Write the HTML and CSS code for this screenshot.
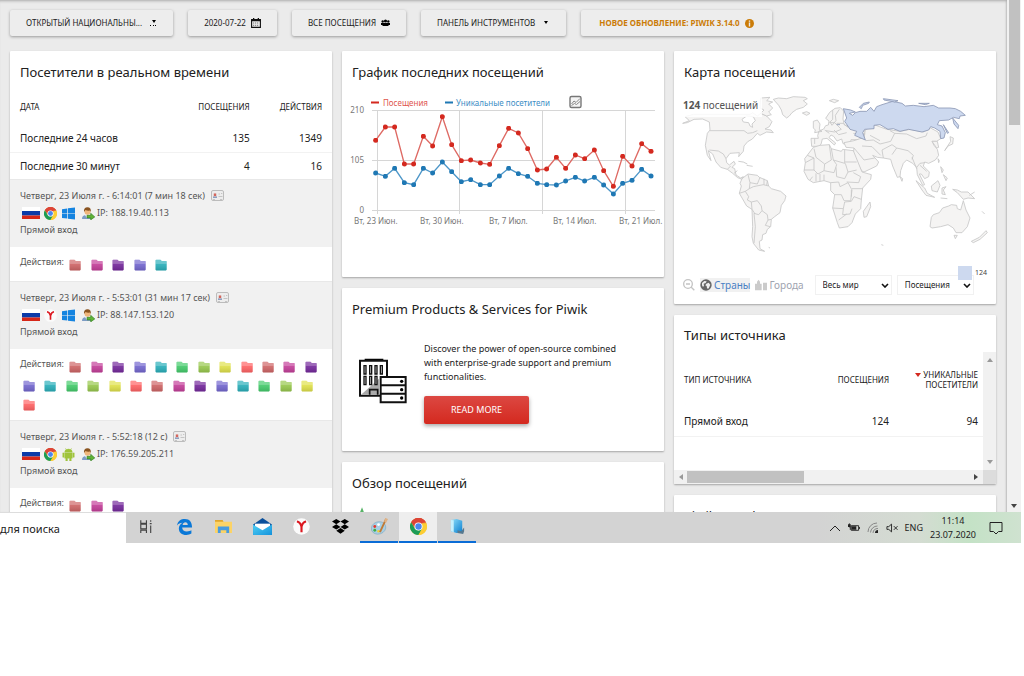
FILE: index.html
```html
<!DOCTYPE html>
<html lang="ru">
<head>
<meta charset="utf-8">
<title>Piwik</title>
<link rel="stylesheet" href="styles.css">
</head>
<body>
<svg class="defs" aria-hidden="true">
  <defs>
    <linearGradient id="shade" x1="0" y1="0" x2="0" y2="1"><stop offset="0" stop-color="#fff" stop-opacity=".3"/><stop offset=".35" stop-color="#fff" stop-opacity=".3"/><stop offset=".4" stop-color="#fff" stop-opacity=".08"/><stop offset="1" stop-color="#000" stop-opacity=".12"/></linearGradient>
    <linearGradient id="mailg" x1="0" y1="0" x2="1" y2="1"><stop offset="0" stop-color="#4fd0f5"/><stop offset="1" stop-color="#1593dc"/></linearGradient>
    <linearGradient id="bookg" x1="0" y1="0" x2="1" y2="1"><stop offset="0" stop-color="#8fe0fb"/><stop offset="1" stop-color="#0a7fd0"/></linearGradient>
    <marker id="dotR" markerUnits="userSpaceOnUse" markerWidth="16" markerHeight="16" refX="8" refY="8"><circle cx="8" cy="8" r="7.500" fill="#d4291f"/></marker>
    <marker id="dotB" markerUnits="userSpaceOnUse" markerWidth="16" markerHeight="16" refX="8" refY="8"><circle cx="8" cy="8" r="7.500" fill="#1f78b4"/></marker>
  </defs>
  <symbol id="folder" viewBox="0 0 12 12"><path d="M.5 1.500q0-.8.8-.8h4q.7 0 .9.6l.3.7h4.600q.6 0 .6.6v8q0 .8-.8.8H1.300q-.8 0-.8-.8z" fill="currentColor"/><path d="M.5 1.500q0-.8.8-.8h4q.7 0 .9.6l.3.7h4.600q.6 0 .6.6v8q0 .8-.8.8H1.300q-.8 0-.8-.8z" fill="url(#shade)"/></symbol>
  <symbol id="chrome" viewBox="0 0 24 24"><circle cx="12" cy="12" r="12" fill="#f7c52d"/><path d="M12 12 1.600 6A12 12 0 0 1 22.400 6z" fill="#dc4437"/><path d="M12 6h10.400A12 12 0 0 0 1.600 6L7 14z" fill="#dc4437"/><path d="M1.600 6A12 12 0 0 0 12 24l5.200-9L12 17.500 7 15z" fill="#1c9c57"/><path d="M22.400 6A12 12 0 0 1 12 24l5.300-9.200L17 7z" fill="#fccd33"/><path d="M12 6h10.400l.6 1.500H15z" fill="#dc4437" opacity=".6"/><circle cx="12" cy="12" r="5.700" fill="#fff"/><circle cx="12" cy="12" r="4.500" fill="#4a87ee"/></symbol>
  <symbol id="yandex" viewBox="0 0 24 24"><circle cx="12" cy="12" r="11.700" fill="#fbfbfb"/><path d="M5.500 5c3 .3 5.500 3.500 6.500 7.500C13 8.500 15.500 5.300 18.500 5M12 12v8" fill="none" stroke="#dc1820" stroke-width="3"/></symbol>
  <symbol id="win" viewBox="0 0 13 12"><path d="M0 1.700 5.300.9v4.800H0zM6 .8 13 0v5.700H6zM0 6.300h5.300v4.800L0 10.400zM6 6.300h7V12l-7-.8z" fill="#1584e0"/></symbol>
  <symbol id="android" viewBox="0 0 12 12"><path d="M2.500 4A3.500 3 0 0 1 9.500 4zM2.500 4.500h7v5h-1V12H7V9.500H5V12H3.500V9.500h-1zM.7 4.500h1.200v4H.7zM10.100 4.500h1.200v4h-1.200zM3 0l1 1.500M9 0 8 1.500" fill="#a0c43c" stroke="#a0c43c" stroke-width=".4"/></symbol>
  <symbol id="flag" viewBox="0 0 18 12"><path d="M0 0h18v4H0z" fill="#fff"/><path d="M0 4h18v4.500H0z" fill="#0b3ba8"/><path d="M0 8.500h18V12H0z" fill="#d62718"/></symbol>
  <symbol id="visitor" viewBox="0 0 13 13"><path d="M0 12c0-3 1.500-4 4.500-4S9 9 9 12z" fill="#7d9cc4"/><path d="M3 8l1.700 3L7 8z" fill="#e9eef5"/><circle cx="5.500" cy="4.800" r="3" fill="#f0b77c"/><path d="M2 5C1.500 2 3 .3 5.500.3S9.300 2 8.800 5L8 3.500Q5.500 4 3.500 3z" fill="#8a5420"/><path d="M5 8.300h3.700V6.300l4.100 3.600-4.100 3v-2H5z" fill="#5fb336" stroke="#2f7a1e" stroke-width=".6"/></symbol>
  <symbol id="card" viewBox="0 0 13 12"><rect x=".5" y=".5" width="12" height="10" rx="1.500" fill="#ededed" stroke="#bcbcbc"/><path d="M2 3.500h4V8H2z" fill="#e0cfcd"/><path d="M3 3.500h2V6H3z" fill="#d5655c"/><path d="M2 6.500h4V8H2z" fill="#8e9fc0"/><path d="M7.500 4H9M10 3.500h1.300M7.500 6.500h4M2 9.500h2M9 9.500h2" stroke="#c4c4c4"/></symbol>
</svg>

<div class="desktop">
  <div class="browser">
    <main class="page">
      <nav class="toolbar">
        <button class="tool" type="button">Открытый национальны... <svg class="caret" width="8" height="6" viewBox="0 0 8 6"><path d="M3 0h4L5 3z"/><path d="M1 5h1v1H1zM4 5h1v1H4zM6 5h1v1H6z"/></svg></button>
        <button class="tool" type="button">2020-07-22 <svg width="10" height="10" viewBox="0 0 10 10"><path d="M.6 1.600h8.800v7.800H.6z" fill="none" stroke="#111" stroke-width="1.100"/><path d="M.5 1.300h9v2h-9zM2 0h1.300v2H2zM6.700 0H8v2H6.700z" fill="#111"/><path d="M2 5h6M2 7.300h6" stroke="#777" stroke-dasharray="1.200 .8"/></svg></button>
        <button class="tool" type="button">Все посещения <svg width="9" height="8" viewBox="0 0 9 8"><circle cx="1.700" cy="2.500" r="1.200"/><circle cx="7.300" cy="2.500" r="1.200"/><circle cx="4.500" cy="2" r="1.600"/><path d="M0 4h9v2H7.500v1h-6V6H0z"/></svg></button>
        <button class="tool" type="button">Панель инструментов <svg class="caret" width="8" height="6" viewBox="0 0 8 6"><path d="M2 1h4L4 4z"/></svg></button>
        <button class="tool update" type="button">Новое обновление: Piwik 3.14.0 <svg width="9" height="9" viewBox="0 0 9 9"><circle cx="4.500" cy="4.500" r="4.500" fill="#cb7c08"/><path d="M3.800 1.500h1.400v1.300H3.800zM3.800 3.500h1.400v4H3.800z" fill="#ebebeb"/></svg></button>
      </nav>

      <div class="columns">
        <div class="column">
          <section class="widget">
            <h2>Посетители в реальном времени</h2>
            <table class="totals">
              <thead><tr><th>Дата</th><th>Посещения</th><th>Действия</th></tr></thead>
              <tbody>
                <tr><td>Последние 24 часов</td><td>135</td><td>1349</td></tr>
                <tr><td>Последние 30 минут</td><td>4</td><td>16</td></tr>
              </tbody>
            </table>
            <div class="visit">
              <p>Четверг, 23 Июля г. - 6:14:01 (7 мин 18 сек) <svg class="profile"><use href="#card"/></svg></p>
              <p class="client"><svg class="flag"><use href="#flag"/></svg><svg><use href="#chrome"/></svg><svg><use href="#win"/></svg><svg class="who"><use href="#visitor"/></svg><span>IP: 188.19.40.113</span></p>
              <p>Прямой вход</p>
            </div>
            <div class="actions"><span>Действия:</span>
              <svg class="c1"><use href="#folder"/></svg> <svg class="c2"><use href="#folder"/></svg> <svg class="c3"><use href="#folder"/></svg> <svg class="c4"><use href="#folder"/></svg> <svg class="c5"><use href="#folder"/></svg>
            </div>
            <div class="visit">
              <p>Четверг, 23 Июля г. - 5:53:01 (31 мин 17 сек) <svg class="profile"><use href="#card"/></svg></p>
              <p class="client"><svg class="flag"><use href="#flag"/></svg><svg><use href="#yandex"/></svg><svg><use href="#win"/></svg><svg class="who"><use href="#visitor"/></svg><span>IP: 88.147.153.120</span></p>
              <p>Прямой вход</p>
            </div>
            <div class="actions"><span>Действия:</span>
              <svg class="c1"><use href="#folder"/></svg> <svg class="c2"><use href="#folder"/></svg> <svg class="c3"><use href="#folder"/></svg> <svg class="c4"><use href="#folder"/></svg> <svg class="c5"><use href="#folder"/></svg> <svg class="c6"><use href="#folder"/></svg> <svg class="c7"><use href="#folder"/></svg> <svg class="c8"><use href="#folder"/></svg> <svg class="c9"><use href="#folder"/></svg>
              <svg class="c1"><use href="#folder"/></svg> <svg class="c2"><use href="#folder"/></svg> <svg class="c3"><use href="#folder"/></svg> <svg class="c4"><use href="#folder"/></svg> <svg class="c5"><use href="#folder"/></svg> <svg class="c6"><use href="#folder"/></svg> <svg class="c7"><use href="#folder"/></svg> <svg class="c8"><use href="#folder"/></svg> <svg class="c9"><use href="#folder"/></svg>
              <svg class="c1"><use href="#folder"/></svg> <svg class="c2"><use href="#folder"/></svg> <svg class="c3"><use href="#folder"/></svg> <svg class="c4"><use href="#folder"/></svg> <svg class="c5"><use href="#folder"/></svg> <svg class="c6"><use href="#folder"/></svg> <svg class="c7"><use href="#folder"/></svg> <svg class="c8"><use href="#folder"/></svg> <svg class="c9"><use href="#folder"/></svg>
            </div>
            <div class="visit">
              <p>Четверг, 23 Июля г. - 5:52:18 (12 с) <svg class="profile"><use href="#card"/></svg></p>
              <p class="client"><svg class="flag"><use href="#flag"/></svg><svg><use href="#chrome"/></svg><svg><use href="#android"/></svg><svg class="who"><use href="#visitor"/></svg><span>IP: 176.59.205.211</span></p>
              <p>Прямой вход</p>
            </div>
            <div class="actions"><span>Действия:</span>
              <svg class="c1"><use href="#folder"/></svg> <svg class="c2"><use href="#folder"/></svg> <svg class="c3"><use href="#folder"/></svg>
            </div>
          </section>
        </div>

        <div class="column">
          <section class="widget evolution">
            <h2>График последних посещений</h2>
            <svg class="chart" viewBox="0 0 322 150">
              <g fill="none" stroke="#d6d6d6"><path d="M30 20.500h283M30 70.500h283M30 120.500h283M35.500 20v104M117.500 20v104M200.500 20v104M283.500 20v104"/></g>
              <path d="M29 12.500h8" stroke="#d4291f" stroke-width="2"/><path d="M103 12.500h8" stroke="#1f78b4" stroke-width="2"/>
              <text x="41" y="16" fill="#e0554d">Посещения</text><text x="114" y="16" fill="#3d8ec5">Уникальные посетители</text>
              <rect x="228" y="6.500" width="11" height="11" rx="1.500" fill="#f4f4f4" stroke="#777" stroke-width="1.400"/><path d="m229.500 14 2.500-3 2 1.500 4-4M229.500 15.500l3-2 2 1 3.500-3" fill="none" stroke="#888"/>
              <g fill="#777"><g text-anchor="end"><text x="22" y="23">210</text><text x="22" y="73">105</text><text x="22" y="123">0</text></g>
              <text x="12" y="134">Вт, 23 Июн.</text><text x="78" y="134">Вт, 30 Июн.</text><text x="147" y="134">Вт, 7 Июл.</text><text x="211" y="134">Вт, 14 Июл.</text><text x="277" y="134">Вт, 21 Июл.</text></g>
              <svg width="322" height="150" viewBox="6 0 966 450"><g fill="none" stroke-width="4">
                <polyline stroke="#de6a64" marker-start="url(#dotR)" marker-mid="url(#dotR)" marker-end="url(#dotR)" points="107,151 136,111 164,111 193,222 221,222 250,139 278,168 307,80 335,164 364,212 392,210 421,219 449,223 478,167 506,115 535,129 563,176 592,240 620,237 649,202 677,235 706,195 734,206 763,180 791,242 820,289 848,199 876,228 905,161 933,184"/>
                <polyline stroke="#4d96c8" marker-start="url(#dotB)" marker-mid="url(#dotB)" marker-end="url(#dotB)" points="107,249 136,259 164,235 193,278 221,284 250,235 278,249 307,216 335,245 364,275 392,269 421,284 449,284 478,258 506,235 535,251 563,259 592,280 620,284 649,285 677,273 706,262 734,273 763,262 791,285 820,312 848,280 876,271 905,238 933,258"/>
              </g></svg>
            </svg>
          </section>

          <section class="widget premium">
            <h2>Premium Products &amp; Services for Piwik</h2>
            <div class="promo">
              <svg class="promo-art" viewBox="0 0 144 138"><path d="M17 2h56v6H17z"/><path d="M3 8h81v105H3z" fill="#fff" stroke="#111" stroke-width="6"/><path d="M6 110 60 62v48z" fill="#aaa"/><path d="M15 23h6v25h-6zM32 23h6v25h-6zM48 23h6v25h-6zM64 23h6v25h-6zM15 55h6v25h-6zM32 55h6v25h-6zM48 55h6v25h-6z" fill="#ddd" stroke="#111" stroke-width="4"/><path d="M32 110V95h24v15" fill="#aaa" stroke="#111" stroke-width="5"/><path d="M65 57h75v76H65zM65 82h75M65 107h75" fill="#fff" stroke="#111" stroke-width="6"/><circle cx="128" cy="70" r="5"/><circle cx="128" cy="95" r="5"/><circle cx="128" cy="120" r="5"/></svg>
              <div class="promo-text"><p>Discover the power of open-source combined with enterprise-grade support and premium functionalities.</p><a class="more" href="#more">READ MORE</a></div>
            </div>
          </section>

          <section class="widget overview">
            <h2>Обзор посещений</h2>
            <svg class="spark" viewBox="0 0 100 20"><path d="M0 7h6M32 7h5" stroke="#bbb" stroke-width="1.500"/><path d="M8 12l5-4 2-5 3 8 8-1 10 4" fill="none" stroke="#58b368" stroke-width="2"/></svg>
          </section>
        </div>

        <div class="column">
          <section class="widget mapcard">
            <h2>Карта посещений</h2>
            <div class="mapwrap">
              <p class="mapcount"><b>124</b> посещений</p>
              <svg class="map" viewBox="12 45 966 480">
                <g fill="#f5f4f3" stroke="#c6c6c6" stroke-width="2.500" stroke-linejoin="round">
                  <path d="M38 130 58 122 45 110 70 103H240L248 98 262 108 272 100 290 108 306 125 298 140 285 147 303 150 310 158 290 156 270 166 262 160 247 177 233 185 222 198 220 214 206 230 208 218 180 220 168 236 170 248 178 255 192 244 196 252 186 262 194 266 198 285 212 294 220 290 216 298 203 293 188 280 172 268 152 262 138 246 128 222 115 212 123 242 112 226 106 196 112 160 120 150 118 126 98 117 72 118 52 128z"/>
                  <path d="M120 152H222L233 160 248 158 262 152M118 210 145 213 160 222 168 236M172 268l10-10M192 280l10-8" fill="none"/>
                  <path d="M216 118 230 108 250 110 256 122 246 132 248 142 240 138 236 128 220 126z" fill="#fff"/>
                  <path d="M272 54 300 52 290 62 308 66 296 72 308 84 296 96 304 104 290 108 272 100 282 90 270 84zM310 58 325 54 350 56 370 50 405 52 412 56 400 62 412 72 400 82 380 88 366 98 358 108 350 114 338 104 334 90 326 76zM397 99 410 95 420 100 410 106zM205 244l15 2 12 6 M230 256l18 3"/>
                  <path d="M478 62l12-4 16 4-12 6zM430 124l12-4 8 12-2 16 8 6-22 4 2-8-6-6zM447 153l14-6 6-10 8-2 2-12-10-8 12-18 16-12 16-2 10 10-2 24 4 18 16 6 24 2 22 10 0 20-16 6-26 0-2 16-22-4-4-14-14 6-10-14 -8-4-6 8 20 16-4 6-22-20-14 2-4 16-8 6h-20l-2-24h22l-2-8z"/>
                  <path d="M488 90v28l-8 8 6 10 12-14-2-16 12-18M478 128h16l20 20-20 8-26-4M500 130h20l14 12M492 150l14 14 24-6M464 150l14 10M434 176v16" fill="none"/>
                  <path d="M582 172 586 150 612 134 650 148 690 154 720 148 760 156 782 144 804 156 812 176 800 184 786 184 792 196 802 208 806 226 796 240 776 250 764 246 760 258 778 276 776 290 764 296 754 282 748 282 764 314 758 316 742 284 740 262 728 250 710 240 700 250 692 272 690 290 682 292 668 258 662 238 640 234 622 232 608 226 626 246 620 258 582 276 574 272 550 220 552 204 528 202 522 188 552 182z"/>
                  <path d="M586 182 610 180 630 192 662 184 674 160 710 162 740 176 768 168 772 158M600 166l30 16M576 198l30 2 26 26M640 234l-4-24 30-16 14 10 34 8 16 14-4 12M680 204l-14 20 M552 204l30 36 32-6M726 232l14 34M740 262l10-12 14-2M750 256l20 18M674 160l-14-8" fill="none"/>
                  <path d="M430 202 450 196 478 194 484 206 514 214 518 208 550 212 576 276 604 284 602 298 578 324 574 360 572 386 556 402 546 428 534 440 508 444 502 428 488 384 494 344 482 332 482 308 462 302 430 308 414 298 402 274 406 248 404 236z"/>
                  <path d="M406 248 432 234V270H402M432 234 412 226M432 206 438 232 464 252 484 240 478 194M484 206 490 240 524 250V210M524 246H560M464 252 462 272 444 282 432 270M462 272 492 278 500 254 490 240M498 262 500 290 524 296 534 276 526 250M530 306 566 308 572 290 550 278M482 308 506 306 510 320 534 308 546 330 542 362 522 362 514 344 494 344M488 384 520 386 524 366 544 364 552 350 574 358M520 386 518 404 540 402 546 386M506 420 530 402M438 304V280M450 304V282M462 302V284M420 300 428 290M546 326H578M534 276 560 270M544 330V350" fill="none"/>
                  <path d="M600 366 602 380 590 410 582 412 580 394zM550 160l36 2"/>
                  <path d="M216 296 234 282 262 286 268 292 292 302 296 318 304 326 332 334 348 348 344 362 334 376 330 398 314 410 304 418 302 440 292 448 288 460 278 464 276 480 268 484 270 506 284 514 266 510 250 490 246 470 248 440 246 388 230 378 208 340 214 318 210 310z"/>
                  <path d="M234 284 240 308 262 312 270 292M240 308 238 326 250 320 280 314 296 318M208 340 226 334 238 326M226 334 236 350 232 360 244 366 246 388M244 366 262 362 274 378 276 392 292 404 294 420 304 418M276 392 266 404 252 400 256 440 252 490M294 420 286 436 300 440M282 296V314M292 302 290 316M254 400 246 388" fill="none"/>
                  <path d="M738 302 764 324 772 340 794 352 768 346 756 330zM784 318 804 302 810 316 802 336 786 332zM816 324l12-4-8 10 6 14-10-2zM812 260l8 10-4 8zM820 284l12 10-4 8zM848 328l14 2 12 6 20 0 20 20-20-2-14 4-18-20zM898 346l16-10M812 354l20 2M824 212 834 198 848 192 850 174 840 170 842 184zM786 184l16 0 4 18-6 2zM690 290l8 6-2 8zM804 236l4 6-2 6z"/>
                  <path d="M784 412 790 404 808 398 818 384 836 378 844 374 860 376 862 386 872 390 880 362 888 390 900 414 892 440 876 458 858 458 850 444 834 434 812 440 786 444 780 440zM852 466l10 0-6 10zM904 484l24-12 20-20 4 6-22 20-20 10zM936 394l8 8M634 494l6 2M296 502l4 2"/>
                </g>
                <g fill="#cdd9ef" stroke="#8b98b4" stroke-width="2.500" stroke-linejoin="round">
                  <path d="M520 86 542 90 556 96 538 100 548 106 556 98 570 94 590 94 602 82 612 94 620 80 636 74 668 64 696 70 706 78 730 76 762 80 790 76 806 84 840 84 856 86 872 94 886 106 870 108 868 116 850 112 836 120 808 122 802 134 816 138 826 158 822 174 812 176 810 154 794 144 782 140 776 150 756 156 716 148 690 154 670 146 654 148 630 134 612 136 612 146 584 148 578 158 586 180 554 166 560 154 540 148 524 124 530 114z"/>
                  <path d="M848 114 866 136 864 146 852 132zM568 82 580 70 598 66 596 70 578 76 574 86zM640 56l44 6-10 4-32-6zM746 70l32 0-12 4zM820 134l16 24-4 2zM500 134h10"/>
                </g>
              </svg>
            </div>
            <div class="mapctl">
              <svg class="mini" viewBox="0 0 36 36"><circle cx="15" cy="15" r="13" fill="none" stroke="#c4c4c4" stroke-width="4"/><path d="m24 24 10 10M9 15h12" stroke="#c4c4c4" stroke-width="4"/></svg>
              <a class="view on" href="#countries"><svg class="mini" viewBox="0 0 36 36"><circle cx="18" cy="18" r="17" fill="#666"/><path d="M6 12 13 6l7 1-3 5-6 2 1 6-3 4-3-5zM19 14l7-3 5 6-4 9-3 4-3-3-1-6-4-2z" fill="#eee"/></svg>Страны</a>
              <a class="view" href="#cities"><svg class="mini" viewBox="0 0 36 36"><path d="M0 34V14h6V8l5-6 4 6v6h5v20zM24 34V11h12v23z" fill="#cbcbcb"/></svg>Города</a>
              <span class="pick"><select aria-label="Регион"><option>Весь мир</option></select><svg viewBox="0 0 8 5"><path d="m1 1 3 3 3-3" fill="none" stroke="#111" stroke-width="1.600"/></svg></span>
              <span class="pick"><select aria-label="Показатель"><option>Посещения</option></select><svg viewBox="0 0 8 5"><path d="m1 1 3 3 3-3" fill="none" stroke="#111" stroke-width="1.600"/></svg><span class="legend"><i></i>124</span></span>
            </div>
          </section>

          <section class="widget sources">
            <h2>Типы источника</h2>
            <div class="scroller">
              <div class="tablewrap">
                <table>
                  <thead><tr><th>Тип источника</th><th>Посещения</th><th><svg width="6" height="5" viewBox="0 0 6 5"><path d="M0 0h6L3 4z" fill="#d4291f"/></svg> Уникальные посетители</th></tr></thead>
                  <tbody><tr><td>Прямой вход</td><td>124</td><td>94</td></tr></tbody>
                </table>
              </div>
              <div class="vbar"><svg viewBox="0 0 6 4"><path d="M0 4h6L3 0z" fill="#999"/></svg><svg viewBox="0 0 6 4"><path d="M0 0h6L3 4z" fill="#999"/></svg></div>
              <div class="hbar"><svg viewBox="0 0 4 6"><path d="M4 0v6L0 3z" fill="#999"/></svg><span class="thumb"></span><svg viewBox="0 0 4 6"><path d="M0 0v6l4-3z" fill="#444"/></svg></div>
              <div class="corner"></div>
            </div>
          </section>

          <section class="widget blog"><h2>Piwik.org Blog</h2></section>
        </div>
      </div>
    </main>
    <div class="pagebar"><span class="thumb"></span><svg viewBox="0 0 6 4"><path d="M0 0h6L3 4z" fill="#444"/></svg></div>
  </div>

  <footer class="taskbar">
    <div class="search">для поиска</div>
    <div class="apps">
      <button type="button" aria-label="Представление задач"><svg viewBox="0 0 18 18"><path d="M4 2.500v3h6v-3M4 16v-3h6v3M4 6.500h6v5H4zM14.500 8v8M14.500 2.500v1.500M13.500 6h2" fill="none" stroke="#444" stroke-width="1.200"/></svg></button>
      <button type="button" aria-label="Edge"><svg viewBox="0 0 18 18"><path d="M1 8C2 3 5 1 9.500 1 14.500 1 17 4.500 17 10H6.500c.2 3 2 4.200 5 4.200 2 0 3.500-.5 4.800-1.200v3.500C14.800 17.500 13 18 11 18 6 18 3 15 3 11c0-2.500 1.500-4.700 4-6C4.500 5 2.500 6 1 8zM7 7.300h5.500C12.300 5.500 11.500 4.500 10 4.500S7.300 5.500 7 7.300z" fill="#0b78d7"/></svg></button>
      <button type="button" aria-label="Проводник"><svg viewBox="0 0 18 18"><path d="M0 2h8l1 2h9v12H0z" fill="#fcd366"/><path d="M0 2h8l1 2H0z" fill="#e0a62c"/><path d="M3 16V9h12v7h-3v-3H6v3z" fill="#479be0"/></svg></button>
      <button type="button" aria-label="Почта"><svg class="big" viewBox="0 0 20 18"><path d="M0 7 10 0l10 7v11H0z" fill="#0a509c"/><path d="M2 6h16v8H2z" fill="#fff"/><path d="M0 7l10 6 10-6v11H0z" fill="url(#mailg)"/></svg></button>
      <button type="button" aria-label="Яндекс"><svg><use href="#yandex"/></svg></button>
      <button type="button" aria-label="Dropbox"><svg viewBox="0 0 18 18"><path d="m4.500 1 4.500 2.800-4.500 2.800L0 3.800zM13.500 1 18 3.800l-4.500 2.800L9 3.800zM4.500 6.600 9 9.400l-4.500 2.800L0 9.400zM13.500 6.600 18 9.400l-4.500 2.800L9 9.400zM9 10.600l4.500 2.800L9 16.600l-4.500-3.200z"/></svg></button>
      <button class="open" type="button" aria-label="Paint"><svg viewBox="0 0 18 18"><ellipse cx="8" cy="10.500" rx="7.800" ry="6.500" transform="rotate(-18 8 10.500)" fill="#a8cfe4" stroke="#7fa8be" stroke-width=".6"/><circle cx="4" cy="9" r="1.500" fill="#e23b2e"/><circle cx="8" cy="7" r="1.500" fill="#fff"/><circle cx="4" cy="13" r="1.500" fill="#3fae49"/><circle cx="8" cy="14" r="1.400" fill="#f3cf3a"/><path d="M16 1 9.500 15" stroke="#c07a35" stroke-width="2"/><path d="m15 0 3 1-2 4-2-1z" fill="#e0b183"/></svg></button>
      <button class="open active" type="button" aria-label="Chrome"><svg><use href="#chrome"/></svg></button>
      <button class="open" type="button" aria-label="Блокнот"><svg viewBox="0 0 18 18"><path d="m2 2 6-1 6 2v12l-6 1-6-2z" fill="url(#bookg)"/><path d="m2 2 3 .5V15l-3-1z" fill="#c6f0fd"/><path d="m9 13 4 1 3-4v4l-1 3-6-1z" fill="#56788f"/></svg></button>
    </div>
    <div class="tray">
      <svg viewBox="0 0 12 10"><path d="m1 8 5-5 5 5" fill="none" stroke="#222"/></svg>
      <svg viewBox="0 0 13 10"><path d="M3.500 2.500h8v5h-8zM12.500 4v2M1.500 0v4h1v3" fill="none" stroke="#222"/><path d="M4 3h5v4H4zM0 1h3v3H0z" fill="#222"/></svg>
      <svg viewBox="0 0 12 12"><path d="M1 10A9 9 0 0 1 10 1M3.500 10.500A7 7 0 0 1 10.500 4M6 11A5 5 0 0 1 11 6.500" fill="none" stroke="#888"/><path d="M8 11a3 3 0 0 1 3-3v3z" fill="#222"/></svg>
      <svg viewBox="0 0 13 10"><path d="M1 3.500h2L6 .8v8.400L3 6.500H1zM8.500 3l4 4M12.500 3l-4 4" fill="none" stroke="#222"/></svg>
      <span>ENG</span>
      <time>11:14<br>23.07.2020</time>
      <svg class="note" viewBox="0 0 14 14"><path d="M1 1.500h12v9H9.500L7 13l-2.500-2.500H1z" fill="none" stroke="#222"/></svg>
    </div>
  </footer>
</div>
</body>
</html>
```
FILE: styles.css
```css
* { box-sizing: border-box; }
body {
  margin: 0;
  height: 100vh;
  padding: 0 3px 133px 0;
  background: #fff;
  color: #212121;
  font: 10px/14px "Noto Sans", "Open Sans", sans-serif;
}
h2, p { margin: 0; font-weight: 400; }
a { color: inherit; text-decoration: none; }
button { font: inherit; color: inherit; border: 0; background: none; padding: 0; }
.defs { position: absolute; width: 0; height: 0; }
.desktop { height: 100%; display: flex; flex-direction: column; }
.browser { flex: 1; min-height: 0; overflow: hidden; display: flex; background: #ebebeb; }
.page { flex: 1; padding: 10px 11px 0 10px; box-shadow: inset 0 3px 3px -2px #aaa, inset -2px 0 2px -1px #bbb; }

.toolbar { display: flex; gap: 15px; margin-bottom: 15px; }
.tool {
  height: 26px;
  padding: 0 16px;
  display: flex;
  align-items: center;
  gap: 5px;
  border-radius: 2px;
  background: #ededed;
  box-shadow: 0 1px 3px rgba(0, 0, 0, .35);
  font-size: 8px;
  text-transform: uppercase;
  white-space: nowrap;
}
.tool .caret { margin-left: 2px; }
.update { padding: 0 18px; color: #cb7c08; font-weight: 700; }

.columns { display: grid; grid-template-columns: repeat(3, minmax(0, 1fr)); gap: 10px; align-items: start; }
.column { display: grid; gap: 11px; }
.widget { background: #fff; border-radius: 1px; box-shadow: 0 1px 2px rgba(0, 0, 0, .3); overflow: hidden; }
.widget h2 { padding: 11px 10px 8px; font-size: 13px; line-height: 20px; }

table { width: 100%; border-collapse: collapse; }
th { font-weight: 400; font-size: 8px; line-height: 10px; text-transform: uppercase; }
th, td { padding: 0 10px; text-align: right; }
th:first-child, td:first-child { text-align: left; }
.totals th { height: 34px; }
.totals td { height: 28px; border-bottom: 1px solid #f2f2f2; }
.totals tr:last-child td { height: 27px; border: 0; }
.totals th:nth-child(2), .totals td:nth-child(2) { padding-right: 0; }

.visit { padding: 9px 10px; min-height: 68px; background: #f1f1f1; border-top: 1px solid #e8e8e8; color: #555; font-size: 9px; display: grid; align-content: start; gap: 3px; }
.visit p { height: 14px; display: flex; align-items: center; }
.profile { width: 13px; height: 12px; margin-left: 6px; }
.client svg { width: 13px; height: 13px; margin-right: 5px; }
.client .flag { width: 18px; height: 12px; margin: 0 4px 0 2px; }
.client .who { margin: 0 2px; }
.actions { min-height: 34px; padding: 7px 10px; font-size: 13px; line-height: 19px; color: #555; }
.actions span { display: inline-block; width: 43px; font-size: 9px; line-height: 15px; vertical-align: top; }
.actions svg { width: 18px; height: 12px; vertical-align: middle; }
.c1 { color: #cf6667; } .c2 { color: #c4409a; } .c3 { color: #752a9c; }
.c4 { color: #7468cf; } .c5 { color: #2bafba; } .c6 { color: #45cb6c; }
.c7 { color: #98c84e; } .c8 { color: #e0e14c; } .c9 { color: #ff6465; }

.evolution { padding-bottom: 37px; }
.chart { display: block; width: 100%; font-size: 8px; }
.promo { display: flex; align-items: flex-start; gap: 17px; padding: 15px 31px 27px 17px; }
.promo-art { flex: none; width: 48px; height: 46px; margin-top: 16px; }
.promo-text { font-size: 9px; }
.more { display: inline-block; margin-top: 12px; padding: 7px 27px; border-radius: 2px; background: linear-gradient(#dc4842, #d4291f); color: #fff; box-shadow: 0 2px 4px rgba(0, 0, 0, .35); }
.spark { display: block; width: 100px; height: 20px; margin: 6px 0 30px 5px; }

.mapwrap { position: relative; }
.map { display: block; width: 100%; margin-top: 5px; }
.mapcount { position: absolute; left: 0; top: 1px; padding: 2px 4px 5px 9px; background: rgba(255, 255, 255, .85); color: #555; }
.mapctl { display: flex; align-items: center; gap: 5px; padding: 20px 22px 9px 9px; color: #a0a4b0; }
.mini { flex: none; width: 12px; height: 12px; }
.view { display: flex; align-items: center; gap: 2px; }
.on { background: #f1f1f1; color: #4a80c4; }
.view + .pick { margin-left: 6px; }
.pick { position: relative; flex: 1; min-width: 0; }
.pick select { appearance: none; width: 100%; height: 20px; padding: 0 7px; border: 1px solid #f1f1f1; background: #fff; color: #222; font: inherit; font-size: 8px; }
.pick > svg { position: absolute; right: 3px; top: 8px; width: 8px; height: 5px; }
.legend { position: absolute; right: -13px; top: -9px; display: flex; gap: 3px; align-items: center; font-size: 7px; color: #444; white-space: nowrap; }
.legend i { width: 14px; height: 14px; background: #cdd9ef; }

.sources h2 { padding: 10px 10px 7px; }
.scroller { display: grid; grid-template-columns: 1fr 13px; grid-template-rows: 118px 14px; }
.tablewrap { overflow: hidden; }
.sources th { height: 55px; }
.sources td { height: 29px; border-bottom: 1px solid #f2f2f2; }
.sources th:last-child, .sources td:last-child { width: 94px; padding: 0 5px 0 0; }
.sources th:last-child { padding-left: 20px; }
.sources th:nth-child(2), .sources td:nth-child(2) { padding-right: 0; }
.vbar, .hbar { background: #f1f1f1; display: flex; align-items: center; justify-content: space-between; }
.vbar { flex-direction: column; padding: 6px 0; }
.vbar svg { width: 6px; height: 4px; }
.hbar { padding: 0 5px; }
.hbar svg { width: 4px; height: 6px; }
.hbar .thumb { width: 39%; height: 12px; margin: 0 auto 0 4px; background: #c1c1c1; }
.corner { background: #dcdcdc; }

.pagebar { width: 14px; background: #f1f1f1; display: flex; flex-direction: column; align-items: center; justify-content: space-between; padding-bottom: 4px; }
.pagebar .thumb { width: 11px; height: 125px; background: #c1c1c1; }
.pagebar svg { width: 6px; height: 4px; }

.taskbar { flex: none; height: 31px; display: flex; background: linear-gradient(90deg, #d3d3d3 80%, #d4dcd2 90%, #c4e2c6 95%, #cfe2d0); font-size: 11px; }
.search { width: 126px; background: #fff; line-height: 31px; border-top: 1px solid #ddd; }
.apps { display: flex; gap: 1px; flex: 1; }
.apps button { width: 38px; display: grid; place-items: center; border-bottom: 2px solid transparent; }
.apps svg { width: 17px; height: 17px; }
.apps .big { width: 19px; }
.apps .open { border-color: #0a6cd6; }
.apps .active { background: #eee; }
.tray { display: flex; align-items: center; gap: 7px; padding-right: 18px; font-size: 9px; }
.tray svg { width: 12px; height: 12px; }
.tray time { text-align: center; }
.tray .note { width: 14px; height: 14px; margin-left: 6px; }
```
